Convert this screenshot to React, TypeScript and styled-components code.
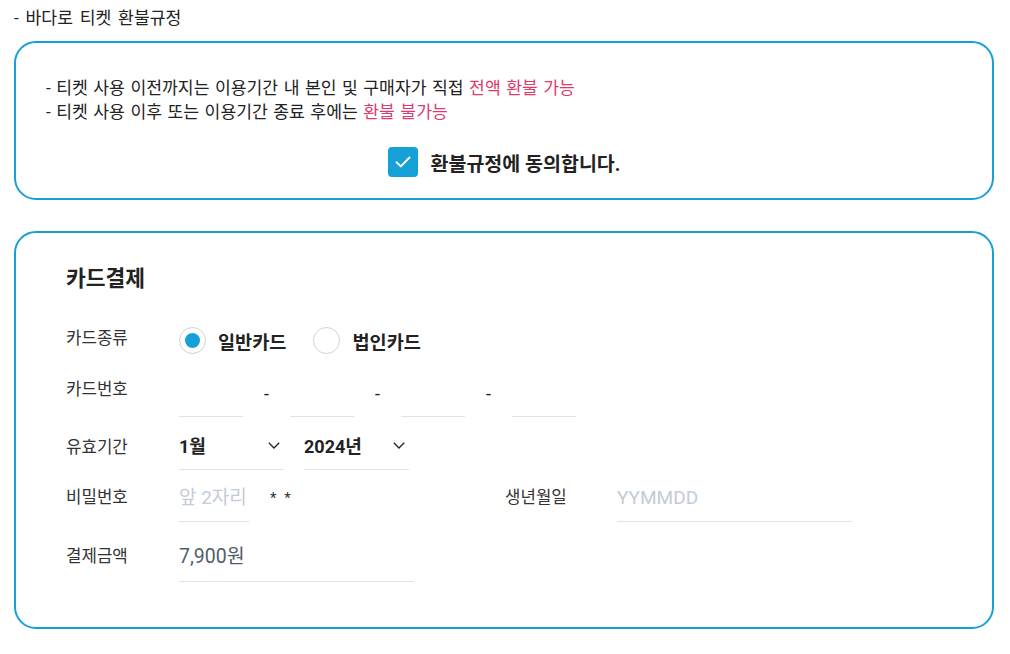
import React from 'react';
import styled, { createGlobalStyle } from 'styled-components';

const BLUE = '#15a0d8';
const LINE = '#dfe2e7';
const FONT = `Roboto, "Noto Sans CJK KR", sans-serif`;

const GlobalStyle = createGlobalStyle`
  html, body {
    margin: 0;
    padding: 0;
    background: #fff;
  }
  body {
    font-family: ${FONT};
    color: #222;
  }
  * {
    box-sizing: border-box;
  }
`;

const ChevronDown = () => (
  <svg width='12' height='7' viewBox='0 0 12 7' fill='none'>
    <path d='M0.8 0.8l5.2 5.2 5.2-5.2' stroke='#222' strokeWidth='1.3' />
  </svg>
);

const CheckMark = () => (
  <svg width='16' height='12' viewBox='0 0 16 12' fill='none'>
    <path
      d='M1.5 6.2l4.3 4.2 8.7-8.9'
      stroke='#fff'
      strokeWidth='2'
      strokeLinecap='round'
      strokeLinejoin='round'
    />
  </svg>
);

export default function App() {
  return (
    <Page>
      <GlobalStyle />
      <PageTitle>- 바다로 티켓 환불규정</PageTitle>

      <Panel>
        <PolicyList>
          <li>
            - 티켓 사용 이전까지는 이용기간 내 본인 및 구매자가 직접{' '}
            <Highlight>전액 환불 가능</Highlight>
          </li>
          <li>
            - 티켓 사용 이후 또는 이용기간 종료 후에는{' '}
            <Highlight>환불 불가능</Highlight>
          </li>
        </PolicyList>
        <Agree>
          <CheckBox>
            <CheckMark />
          </CheckBox>
          <span>환불규정에 동의합니다.</span>
        </Agree>
      </Panel>

      <PaymentPanel>
        <Heading>카드결제</Heading>

        <Row $top={29} $height={36}>
          <Label $shift={-3}>카드종류</Label>
          <RadioGroup>
            <Radio>
              <RadioCircle $checked />
              <span>일반카드</span>
            </Radio>
            <Radio>
              <RadioCircle />
              <span>법인카드</span>
            </Radio>
          </RadioGroup>
        </Row>

        <Row $top={11}>
          <Label $shift={-5}>카드번호</Label>
          {[0, 1, 2, 3].map((i) => (
            <React.Fragment key={i}>
              <Field $width={64}>
                <TextInput />
              </Field>
              {i < 3 && <Dash>-</Dash>}
            </React.Fragment>
          ))}
        </Row>

        <Row $top={5}>
          <Label>유효기간</Label>
          <SelectBox>
            <span>1월</span>
            <ChevronDown />
          </SelectBox>
          <SelectBox $gap={20}>
            <span>2024년</span>
            <ChevronDown />
          </SelectBox>
        </Row>

        <Row $top={4}>
          <Label $shift={-2}>비밀번호</Label>
          <Field $width={70}>
            <TextInput placeholder='앞 2자리' />
          </Field>
          <Masked>* *</Masked>
          <Label $width={112} $shift={-2} $left={215}>
            생년월일
          </Label>
          <Field $width={235}>
            <TextInput placeholder='YYMMDD' />
          </Field>
        </Row>

        <Row $top={12}>
          <Label $shift={-3}>결제금액</Label>
          <Field $width={235}>
            <Amount>7,900원</Amount>
          </Field>
        </Row>
      </PaymentPanel>
    </Page>
  );
}

const Page = styled.div`
  width: 1010px;
  padding: 6px 16px 26px 14px;
`;

const PageTitle = styled.div`
  font-size: 17.2px;
  line-height: 24px;
  word-spacing: 2.5px;
  color: #222;
  margin-bottom: 11px;
`;

const Panel = styled.section`
  border: 2px solid ${BLUE};
  border-radius: 22px;
  padding: 33px 30px 21px;
`;

const PolicyList = styled.ul`
  list-style: none;
  margin: 0;
  padding: 0;
  > li {
    font-size: 17.2px;
    line-height: 24px;
    word-spacing: 1.2px;
    color: #222;
  }
`;

const Highlight = styled.span`
  color: #e03a6c;
`;

const Agree = styled.label`
  display: flex;
  align-items: center;
  justify-content: center;
  gap: 13px;
  margin-top: 23px;
  font-size: 19.5px;
  font-weight: 700;
  color: #222;
`;

const CheckBox = styled.span`
  width: 30px;
  height: 30px;
  border-radius: 4px;
  background: ${BLUE};
  display: flex;
  align-items: center;
  justify-content: center;
`;

const PaymentPanel = styled(Panel)`
  margin-top: 31px;
  padding: 32px 50px 45px;
`;

const Heading = styled.h2`
  margin: 0;
  font-size: 21.5px;
  line-height: 28px;
  font-weight: 700;
  color: #222;
`;

const Row = styled.div<{ $top: number; $height?: number }>`
  display: flex;
  align-items: center;
  margin-top: ${(p) => p.$top}px;
  height: ${(p) => p.$height ?? 48}px;
`;

const Label = styled.div<{ $width?: number; $shift?: number; $left?: number }>`
  flex: none;
  width: ${(p) => p.$width ?? 113}px;
  margin-left: ${(p) => p.$left ?? 0}px;
  font-size: 16.8px;
  color: #333;
  transform: translateY(${(p) => p.$shift ?? 0}px);
`;

const RadioGroup = styled.div`
  display: flex;
  align-items: center;
  gap: 27px;
`;

const Radio = styled.label`
  display: flex;
  align-items: center;
  gap: 12px;
  font-size: 18.6px;
  font-weight: 700;
  color: #222;
`;

const RadioCircle = styled.span<{ $checked?: boolean }>`
  width: 27px;
  height: 27px;
  border-radius: 50%;
  border: 1px solid #cdd2d9;
  display: flex;
  align-items: center;
  justify-content: center;
  &::after {
    content: '';
    width: 15px;
    height: 15px;
    border-radius: 50%;
    background: ${(p) => (p.$checked ? BLUE : 'transparent')};
  }
`;

const Field = styled.div<{ $width: number }>`
  flex: none;
  width: ${(p) => p.$width}px;
  height: 48px;
  border-bottom: 1px solid ${LINE};
  display: flex;
  align-items: center;
`;

const TextInput = styled.input`
  width: 100%;
  border: none;
  outline: none;
  padding: 0;
  background: transparent;
  font-family: ${FONT};
  font-size: 19px;
  color: #222;
  &::placeholder {
    color: #c3cbd8;
  }
`;

const Dash = styled.span`
  width: 47px;
  text-align: center;
  font-size: 18px;
  color: #222;
`;

const SelectBox = styled.div<{ $gap?: number }>`
  flex: none;
  width: 105px;
  height: 48px;
  margin-left: ${(p) => p.$gap ?? 0}px;
  border-bottom: 1px solid ${LINE};
  display: flex;
  align-items: center;
  justify-content: space-between;
  padding-right: 4px;
  font-size: 18px;
  font-weight: 700;
  color: #222;
  > span {
    transform: translateY(-1px);
  }
`;

const Masked = styled.span`
  margin-left: 21px;
  font-size: 15px;
  letter-spacing: 2px;
  color: #333;
  width: 20px;
  white-space: nowrap;
`;

const Amount = styled.span`
  font-size: 19.5px;
  color: #535c6a;
  transform: translateY(-3px);
`;
